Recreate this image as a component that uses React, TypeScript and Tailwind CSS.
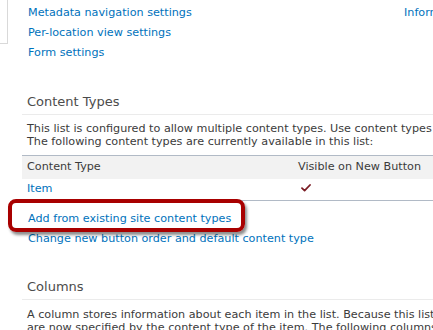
export default function App() {
  return (
    <div className="h-[330px] w-[433px] overflow-hidden bg-white font-['DejaVu_Sans',Verdana,sans-serif] text-[11.2px] text-[#3b3b3b]">
      {/* top: tail of the settings link columns */}
      <div className="flex">
        <div className="h-[44px] w-[8px] shrink-0 border-b border-r border-[#d9d9d9]" />
        <div className="flex w-[396px] shrink-0 flex-col pl-[20px] pt-[3px] leading-[20px] text-[#0072bc]">
          <a>Metadata navigation settings</a>
          <a>Per-location view settings</a>
          <a>Form settings</a>
        </div>
        <div className="whitespace-nowrap pt-[3px] leading-[20px] text-[#0072bc]">
          Information management policy settings
        </div>
      </div>

      {/* Content Types */}
      <section className="ml-[22px] mt-[31px]">
        <h3 className="whitespace-nowrap border-b border-[#ebebeb] pb-[4px] pl-[5px] text-[13px] leading-[16px] text-[#4c4c4c]">
          Content Types
        </h3>
        <div className="mt-[7px] whitespace-nowrap pl-[5px] leading-[13px]">
          <div>
            This list is configured to allow multiple content types. Use content types to specify the
            information you want to display about an item, in addition to its policies, workflows, or other
            behavior.
          </div>
          <div>The following content types are currently available in this list:</div>
        </div>
        <div className="mt-[7px] w-[600px] border-b border-t border-[#b1bac6]">
          <div className="flex h-[23px] items-center bg-[#f2f2f2] pl-[5px]">
            <div className="w-[271px]">Content Type</div>
            <div>Visible on New Button</div>
          </div>
          <div className="flex h-[21px] items-center pl-[5px]">
            <a className="w-[271px] text-[#0072bc]">Item</a>
            <svg width="10" height="8" viewBox="0 0 10 8" className="-mt-[3px] ml-[3px]">
              <path
                d="M1 4.2 L3.6 6.6 L9 1"
                fill="none"
                stroke="#7a1c24"
                strokeWidth="1.8"
                strokeLinecap="round"
                strokeLinejoin="round"
              />
            </svg>
          </div>
        </div>
      </section>

      <div className="relative mt-[8px] flex flex-col whitespace-nowrap pl-[28px] leading-[20px] text-[#0072bc]">
        <a>Add from existing site content types</a>
        <a>Change new button order and default content type</a>
        {/* callout around the first link */}
        <div className="absolute left-[8px] top-[-10px] h-[33px] w-[237px] rounded-[8px] border-[4px] border-[#a80000] shadow-[2px_3px_3px_rgba(0,0,0,0.45)]" />
      </div>

      {/* Columns */}
      <section className="ml-[22px] mt-[30px]">
        <h3 className="whitespace-nowrap border-b border-[#ebebeb] pb-[4px] pl-[5px] text-[13px] leading-[16px] text-[#4c4c4c]">
          Columns
        </h3>
        <div className="mt-[8px] whitespace-nowrap pl-[5px] leading-[13px]">
          <div>
            A column stores information about each item in the list. Because this list allows multiple
            content types, some column settings, such as whether information is required or optional for a
            column,
          </div>
          <div>
            are now specified by the content type of the item. The following columns are currently available
            in this list:
          </div>
        </div>
      </section>
    </div>
  );
}
